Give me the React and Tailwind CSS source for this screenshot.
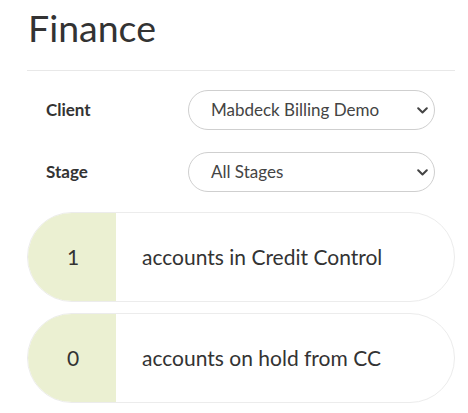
import React from 'react';

function Chevron() {
  return (
    <svg width="11" height="7" viewBox="0 0 11 7" fill="none">
      <path d="M1.2 1.2 L5.5 5.5 L9.8 1.2" stroke="#444" strokeWidth="2" strokeLinecap="round" strokeLinejoin="round" />
    </svg>
  );
}

function SelectBox({ value }) {
  return (
    <div className="w-[247px] h-[40px] rounded-full border border-[#cfcfcf] bg-white flex items-center justify-between pl-[22px] pr-[6px] text-[17px] text-[#444]">
      <span>{value}</span>
      <Chevron />
    </div>
  );
}

function StatCard({ count, label }) {
  return (
    <div className="h-[90px] rounded-full border border-[#ececec] bg-white flex items-stretch overflow-hidden">
      <div className="w-[88px] bg-[#ebf0d2] flex items-center justify-center text-[21px] text-[#333] pl-[2px]">
        {count}
      </div>
      <div className="flex items-center pl-[26px] text-[21px] text-[#333]">{label}</div>
    </div>
  );
}

export default function App() {
  return (
    <div className="min-h-screen bg-white pl-[27px] pr-[13px]" style={{ fontFamily: 'Lato, "Open Sans", sans-serif' }}>
      <h1 className="pt-[6px] text-[37.5px] leading-[44px] text-[#333] pl-[1px]">Finance</h1>
      <div className="mt-[20px] border-t border-[#e8e8e8]" />

      <div className="mt-[19px] flex flex-col gap-[22px]">
        <div className="flex items-center">
          <label className="w-[161px] pl-[19px] text-[17px] font-bold text-[#333]">Client</label>
          <SelectBox value="Mabdeck Billing Demo" />
        </div>
        <div className="flex items-center">
          <label className="w-[161px] pl-[19px] text-[17px] font-bold text-[#333]">Stage</label>
          <SelectBox value="All Stages" />
        </div>
      </div>

      <div className="mt-[20px] flex flex-col gap-[11px]">
        <StatCard count="1" label="accounts in Credit Control" />
        <StatCard count="0" label="accounts on hold from CC" />
      </div>
    </div>
  );
}
